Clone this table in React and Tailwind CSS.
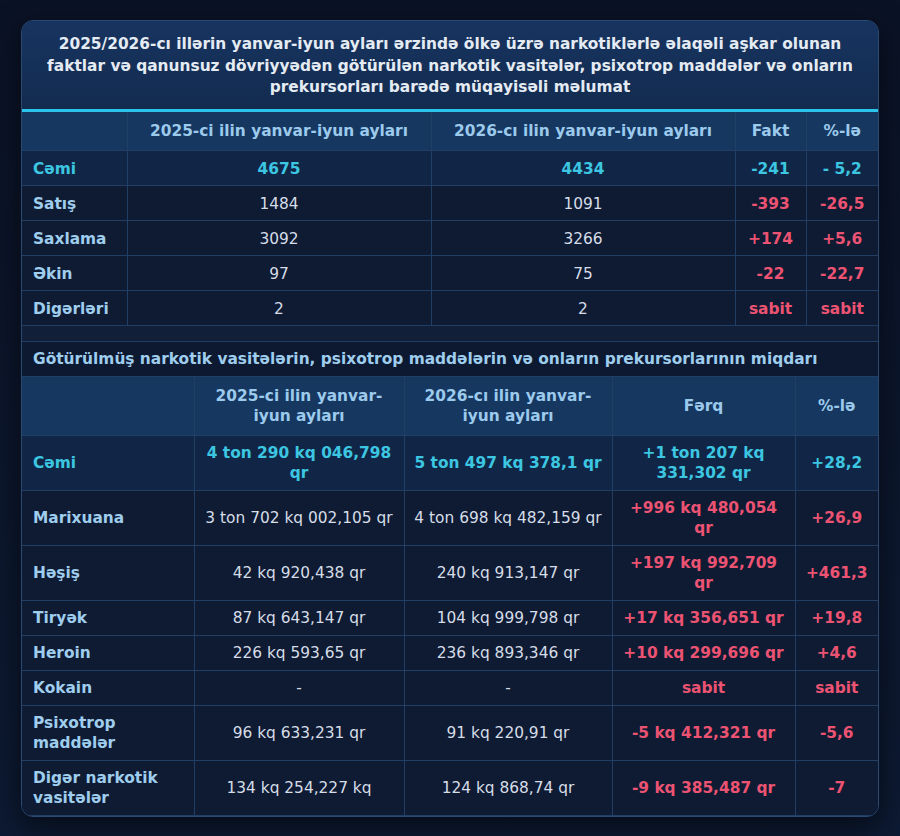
const font = { fontFamily: '"DejaVu Sans", "Noto Sans", sans-serif' };

const summary = [
  { label: "Cəmi", a: "4675", b: "4434", fakt: "-241", pct: "- 5,2", total: true },
  { label: "Satış", a: "1484", b: "1091", fakt: "-393", pct: "-26,5" },
  { label: "Saxlama", a: "3092", b: "3266", fakt: "+174", pct: "+5,6" },
  { label: "Əkin", a: "97", b: "75", fakt: "-22", pct: "-22,7" },
  { label: "Digərləri", a: "2", b: "2", fakt: "sabit", pct: "sabit" },
];

const amounts = [
  { label: "Cəmi", a: "4 ton 290 kq 046,798 qr", b: "5 ton 497 kq 378,1 qr", diff: "+1 ton 207 kq 331,302 qr", pct: "+28,2", total: true },
  { label: "Marixuana", a: "3 ton 702 kq 002,105 qr", b: "4 ton 698 kq 482,159 qr", diff: "+996 kq 480,054 qr", pct: "+26,9" },
  { label: "Həşiş", a: "42 kq 920,438 qr", b: "240 kq 913,147 qr", diff: "+197 kq 992,709 qr", pct: "+461,3" },
  { label: "Tiryək", a: "87 kq 643,147 qr", b: "104 kq 999,798 qr", diff: "+17 kq 356,651 qr", pct: "+19,8" },
  { label: "Heroin", a: "226 kq 593,65 qr", b: "236 kq 893,346 qr", diff: "+10 kq 299,696 qr", pct: "+4,6" },
  { label: "Kokain", a: "-", b: "-", diff: "sabit", pct: "sabit" },
  { label: "Psixotrop maddələr", a: "96 kq 633,231 qr", b: "91 kq 220,91 qr", diff: "-5 kq 412,321 qr", pct: "-5,6" },
  { label: "Digər narkotik vasitələr", a: "134 kq 254,227 kq", b: "124 kq 868,74 qr", diff: "-9 kq 385,487 qr", pct: "-7" },
];

// table 1 rows sit ~1px lower than table 2 in the picture
const cell1 = "border border-[#213e64] px-[8px] pt-[8px] pb-[6px] leading-[20px] first:border-l-0 last:border-r-0";
const cell2 = "border border-[#213e64] px-[8px] py-[7px] leading-[20px] first:border-l-0 last:border-r-0";
const head = "border border-[#213e64] border-t-0 px-[8px] py-[9px] leading-[20px] font-bold text-[#9ccaec] text-center first:border-l-0 last:border-r-0";

function Row({ row, cell, values }) {
  const accent = row.total ? "text-[#3cc6e2]" : "";
  return (
    <tr className={row.total ? "bg-[#112646]" : "bg-[#0e1b32]"}>
      <td className={`${cell} pl-[11px] text-left font-bold ${row.total ? accent : "text-[#9fcdee]"}`}>
        {row.label}
      </td>
      {values.slice(0, 2).map((v, i) => (
        <td key={i} className={`${cell} text-center ${row.total ? `font-bold ${accent}` : "text-[#d6dde8]"}`}>
          {v}
        </td>
      ))}
      {values.slice(2).map((v, i) => (
        <td key={i} className={`${cell} text-center font-bold ${row.total ? accent : "text-[#ec5373]"}`}>
          {v}
        </td>
      ))}
    </tr>
  );
}

function Head({ last }) {
  return (
    <thead>
      <tr className="bg-[#163760]">
        <th className={head}></th>
        <th className={head}>2025-ci ilin yanvar-iyun ayları</th>
        <th className={head}>2026-cı ilin yanvar-iyun ayları</th>
        <th className={head}>{last}</th>
        <th className={head}>%-lə</th>
      </tr>
    </thead>
  );
}

export default function App() {
  return (
    <div
      className="min-h-screen bg-gradient-to-b from-[#0a1225] to-[#0d1a33] px-[21px] pt-[20px] pb-[21px] text-[15.4px]"
      style={font}
    >
      <div className="rounded-xl border border-[#2a4a72] bg-[#0f1c34] overflow-hidden shadow-[0_10px_30px_rgba(0,0,0,0.55)]">
        <div className="bg-gradient-to-b from-[#173460] to-[#132b4f] px-[16px] pt-[13px] pb-[10px] text-center font-bold leading-[21.5px] text-[#e4ebf3]">
          2025/2026-cı illərin yanvar-iyun ayları ərzində ölkə üzrə narkotiklərlə əlaqəli aşkar olunan faktlar və
          qanunsuz dövriyyədən götürülən narkotik vasitələr, psixotrop maddələr və onların prekursorları barədə
          müqayisəli məlumat
        </div>
        <div className="h-[3px] bg-[#2cc4ea]" />

        <table className="w-full table-fixed border-collapse">
          <colgroup>
            <col className="w-[105px]" />
            <col className="w-[304px]" />
            <col className="w-[304px]" />
            <col className="w-[71px]" />
            <col className="w-[72px]" />
          </colgroup>
          <Head last="Fakt" />
          <tbody>
            {summary.map((row) => (
              <Row key={row.label} row={row} cell={cell1} values={[row.a, row.b, row.fakt, row.pct]} />
            ))}
          </tbody>
        </table>

        <div className="h-[15px] bg-[#111f39]" />

        <div className="border-t border-b border-[#213e64] bg-[#0d1930] px-[11px] py-[7px] leading-[20px] font-bold text-[#9fcdee]">
          Götürülmüş narkotik vasitələrin, psixotrop maddələrin və onların prekursorlarının miqdarı
        </div>

        <table className="w-full table-fixed border-collapse">
          <colgroup>
            <col className="w-[172px]" />
            <col className="w-[210px]" />
            <col className="w-[208px]" />
            <col className="w-[183px]" />
            <col className="w-[83px]" />
          </colgroup>
          <Head last="Fərq" />
          <tbody>
            {amounts.map((row) => (
              <Row key={row.label} row={row} cell={cell2} values={[row.a, row.b, row.diff, row.pct]} />
            ))}
          </tbody>
        </table>
      </div>
    </div>
  );
}
